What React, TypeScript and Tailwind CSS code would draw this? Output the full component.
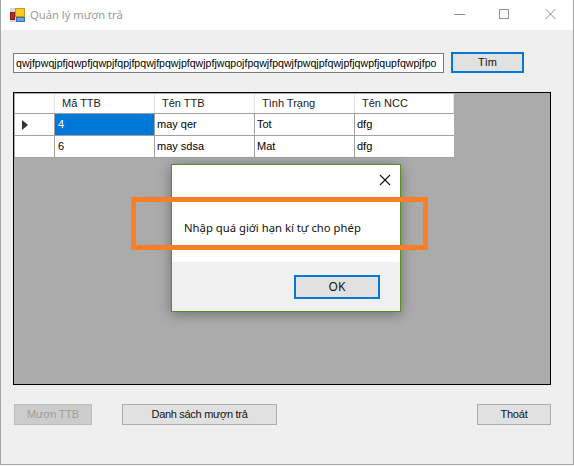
const sans = "font-['Liberation_Sans',sans-serif]"

const columns = [
  { key: 'code', title: 'Mã TTB', width: 'w-[100px]' },
  { key: 'name', title: 'Tên TTB', width: 'w-[100px]' },
  { key: 'status', title: 'Tình Trạng', width: 'w-[100px]' },
  { key: 'vendor', title: 'Tên NCC', width: 'w-[99px]' },
]

const rows = [
  { code: '4', name: 'may qer', status: 'Tot', vendor: 'dfg', current: true },
  { code: '6', name: 'may sdsa', status: 'Mat', vendor: 'dfg', current: false },
]

function AppIcon() {
  return (
    <svg width="15" height="14" viewBox="0 0 15 14" className="shrink-0">
      <rect x="0" y="0" width="15" height="14" fill="#d8d8d8" />
      <rect x="5.5" y="0.5" width="9" height="8" fill="#f6c928" stroke="#c79a1a" />
      <rect x="0.5" y="4.5" width="4" height="7" fill="#c9281e" stroke="#8a1a14" />
      <rect x="6.5" y="9.5" width="8" height="4" fill="#6b9fe0" stroke="#3a6cb0" />
    </svg>
  )
}

function WindowControls() {
  return (
    <div className="flex items-center ml-auto">
      <svg width="12" height="12" viewBox="0 0 12 12" className="mr-[33px]">
        <line x1="0" y1="5.5" x2="11" y2="5.5" stroke="#8f8f8f" />
      </svg>
      <svg width="12" height="12" viewBox="0 0 12 12" className="mr-[34px]">
        <rect x="0.5" y="0.5" width="9" height="9" fill="none" stroke="#8f8f8f" />
      </svg>
      <svg width="12" height="12" viewBox="0 0 12 12" className="mr-[16px]">
        <path d="M0.5 0 L10.5 10 M10.5 0 L0.5 10" stroke="#8f8f8f" />
      </svg>
    </div>
  )
}

function GridTable() {
  return (
    <div className="h-[293px] border border-black bg-[#ababab] p-[1px]">
      <div className="flex h-[19px] w-[439px] bg-white">
        <div className="w-[40px] border-r border-[#e4e4e4]" />
        {columns.map((c) => (
          <div key={c.key} className={`${c.width} pl-[7px] border-r border-[#e4e4e4] text-[11px] leading-[19px] text-[#222]`}>
            {c.title}
          </div>
        ))}
      </div>
      {rows.map((r) => (
        <div key={r.code} className="flex h-[22px] w-[439px] bg-white border-t border-[#a0a0a0] text-[11px] leading-[21px] text-black">
          <div className="w-[40px] flex items-center pl-[7px] border-r border-[#a0a0a0] shrink-0">
            {r.current && (
              <svg width="6" height="10" viewBox="0 0 6 10">
                <path d="M0 0 L6 5 L0 10 Z" fill="#333" />
              </svg>
            )}
          </div>
          <div className={`w-[100px] pl-[3px] border-r border-[#a0a0a0] ${r.current ? 'bg-[#0078d7] text-white' : ''}`}>{r.code}</div>
          <div className="w-[100px] pl-[2px] border-r border-[#a0a0a0]">{r.name}</div>
          <div className="w-[100px] pl-[2px] border-r border-[#a0a0a0]">{r.status}</div>
          <div className="w-[99px] pl-[2px]">{r.vendor}</div>
        </div>
      ))}
      <div className="h-[1px] w-[439px] bg-[#a0a0a0]" />
    </div>
  )
}

function MessageDialog() {
  return (
    <div className="absolute left-[171px] top-[164px] w-[230px] h-[148px] border border-[#5b8c23] bg-white shadow-[0_2px_12px_rgba(0,0,0,0.35)] flex flex-col font-['Noto_Sans',sans-serif]">
      <div className="flex justify-end pt-[9px] pr-[9px] h-[55px]">
        <svg width="12" height="12" viewBox="0 0 12 12">
          <path d="M1 1 L11 11 M11 1 L1 11" stroke="#111" strokeWidth="1.1" />
        </svg>
      </div>
      <div className="pl-[12px] text-[11.3px] leading-[16px] text-[#111] h-[42px]">Nhập quá giới hạn kí tự cho phép</div>
      <div className="flex-1 bg-[#f0f0f0] flex justify-end pt-[13px] pr-[20px]">
        <button type="button" className="w-[86px] h-[24px] border-2 border-[#0078d7] bg-[#e1e1e1] text-[12px] text-[#111]">OK</button>
      </div>
    </div>
  )
}

export default function App() {
  return (
    <div className={`relative w-[574px] h-[466px] overflow-hidden bg-white ${sans}`}>
      <div className="h-[465px] w-[574px] border-l border-b border-r border-[#a3a3a3] flex flex-col bg-[#efefef]">
        <div className="h-[30px] bg-white flex items-center pl-[9px] shrink-0">
          <AppIcon />
          <span className="ml-[5px] text-[11.2px] text-[#9a9a9a] font-['Noto_Sans',sans-serif]">Quản lý mượn trả</span>
          <WindowControls />
        </div>

        <div className="flex items-center pl-[12px] pt-[22px] gap-[7px]">
          <div className="w-[431px] h-[20px] border border-[#7a7a7a] bg-white pl-[2px] text-[10.6px] leading-[18px] text-black overflow-hidden whitespace-nowrap">
            qwjfpwqjpfjqwpfjqwpjfqpjfpqwjfpqwjpfqwjpfjwqpojfpqwjfpqwjfpwqjpfqwjpfjqwpfjqupfqwpjfpo
          </div>
          <button type="button" className="w-[73px] h-[21px] border-2 border-[#0078d7] bg-[#e1e1e1] text-[11px] leading-none text-[#111]">Tìm</button>
        </div>

        <div className="pl-[12px] pr-[22px] pt-[19px]">
          <GridTable />
        </div>

        <div className="flex items-center pl-[13px] pr-[22px] pt-[19px]">
          <button type="button" className="w-[78px] h-[21px] border border-[#bcbcbc] bg-[#cccccc] text-[11px] tracking-[-0.2px] leading-none text-[#9c9c9c]">Mượn TTB</button>
          <button type="button" className="ml-[30px] w-[155px] h-[21px] border border-[#adadad] bg-[#e1e1e1] text-[11px] tracking-[-0.3px] leading-none text-[#111]">Danh sách mượn trả</button>
          <button type="button" className="ml-auto w-[74px] h-[21px] border border-[#adadad] bg-[#e1e1e1] text-[11px] tracking-[-0.2px] leading-none text-[#111]">Thoát</button>
        </div>
      </div>

      <MessageDialog />
      {/* annotation drawn over the screenshot */}
      <div className="absolute left-[131px] top-[197px] w-[297px] h-[53px] border-[5px] border-[#fd7e23]" />
    </div>
  )
}
